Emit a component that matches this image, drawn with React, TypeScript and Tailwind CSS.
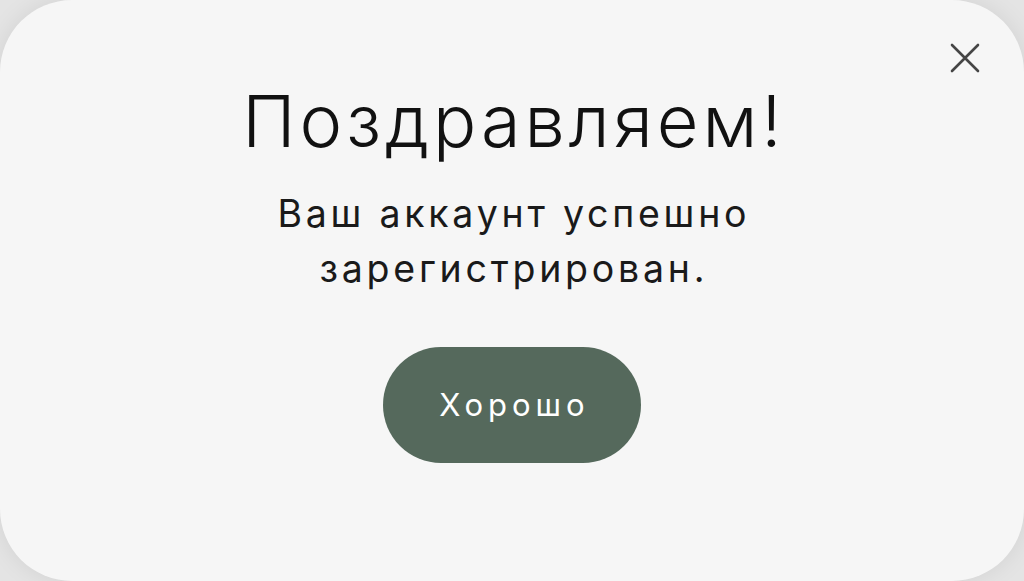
export default function App() {
  return (
    <div className="h-[581px] w-full overflow-hidden bg-[#e4e4e4]">
      <div
        className="relative flex h-[581px] w-full flex-col items-center rounded-[72px] bg-[#f6f6f6] pt-[85px] shadow-[0_0_24px_rgba(0,0,0,0.08)]"
        style={{ fontFamily: 'Inter, "Noto Sans", sans-serif' }}
      >
        <button className="absolute right-[44px] top-[43px] text-[#454545]" aria-label="Закрыть">
          <svg width="30" height="30" viewBox="0 0 30 30" fill="none" stroke="currentColor" strokeWidth="2.6" strokeLinecap="round">
            <path d="M2 2L28 28M28 2L2 28" />
          </svg>
        </button>

        <h1 className="pl-[0.055em] text-[72px] font-[350] leading-none tracking-[0.055em] text-[#111]">Поздравляем!</h1>

        <p className="mt-[29px] pl-[0.1em] text-center text-[37.5px] font-normal leading-[55px] tracking-[0.1em] text-[#1a1a1a]">
          Ваш аккаунт успешно
          <br />
          зарегистрирован.
        </p>

        <button className="mt-[51px] flex h-[116px] w-[258px] items-center justify-center rounded-full bg-[#55695c] pl-[0.16em] text-[31px] font-normal tracking-[0.16em] text-white">
          Хорошо
        </button>
      </div>
    </div>
  )
}
